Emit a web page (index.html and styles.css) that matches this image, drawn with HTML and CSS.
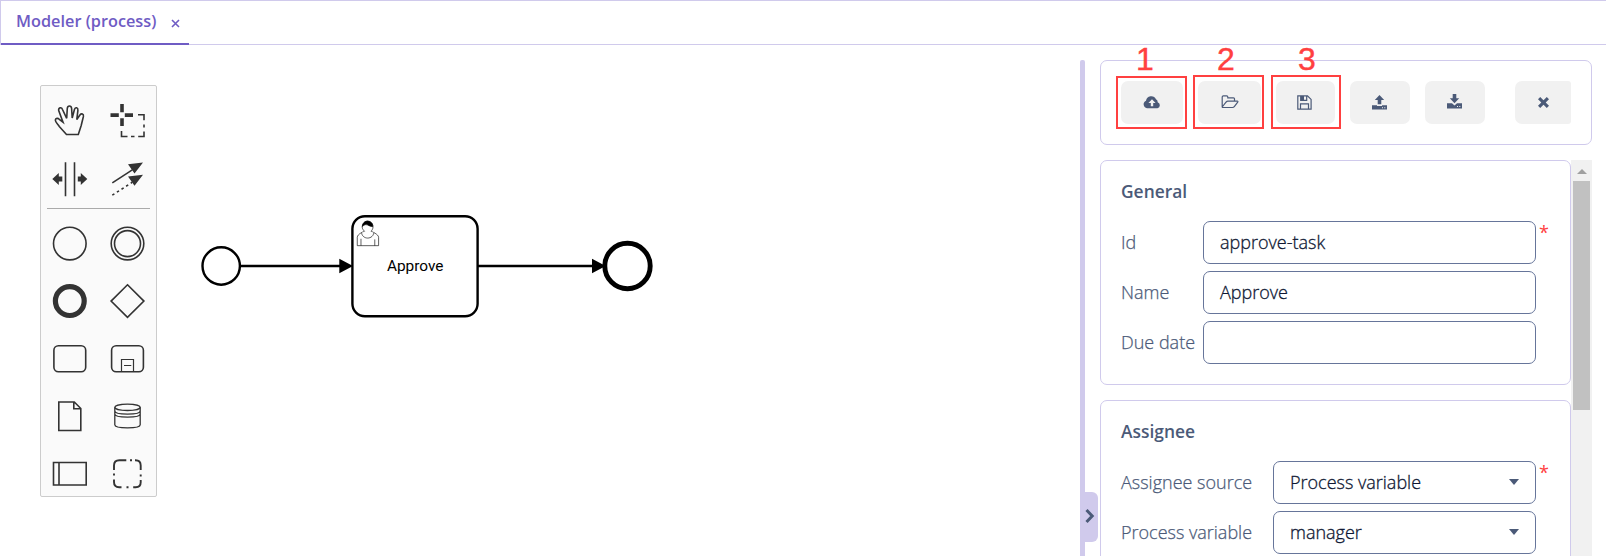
FILE: index.html
```html
<!DOCTYPE html>
<html lang="en">
<head>
<meta charset="utf-8">
<title>Modeler (process)</title>
<link rel="stylesheet" href="styles.css">
</head>
<body>
<header class="tabs">
  <div class="tab"><span class="tab-title">Modeler (process)</span>
    <svg class="tab-close" width="9" height="9" viewBox="0 0 9 9"><path d="M1 1l7 7M8 1l-7 7"/></svg>
  </div>
</header>
<main class="workspace">
  <div class="palette">
    <div class="tools">
      <svg viewBox="41 92 57.5 57.5"><path d="M66.500 134.500L59.300 126.500C57.500 124 55.400 122.200 55.300 120C55.600 118 58 118 59.300 119.300L63 122.200L58.700 110.500C58.300 107.500 61.500 106.800 62.500 109.500L66.700 118.300L67.300 108.300C67.600 105.300 71.300 105.300 71.600 108.300L72.200 118L74.500 109.300C75.500 106.800 78.200 107.500 77.900 110.300L76.800 119.500L79.900 115C81.500 113 83.900 114 83.400 116.500L81.200 125.500L78.300 134.500Z"/></svg>
      <svg viewBox="99 92 57.500 57.500"><path class="solid" d="M120.200 104h3.600v8.200h-3.600zM120.200 118.200h3.600v7.800h-3.600zM110.500 113.200h8.300v3.700h-8.300zM124.800 113.200h8.200v3.700h-8.200z"/><path d="M138 114.800h6v5.500M144 124.500v3M144 131.500v5h-5.800M134.500 136.500h-3.500M127.500 136.500h-6v-5.500"/></svg>
      <svg viewBox="41 149.500 57.500 57.500"><path d="M65.500 161.700v34M74.500 161.700v34"/><path class="solid" d="M52.300 178.400l6.500-6v3.500h3.500v5h-3.500v3.500zM87.300 178.400l-6.500-6v3.500h-3v5h3v3.500z"/></svg>
      <svg viewBox="99 149.500 57.500 57.500"><path d="M112.300 182.300l20-13"/><path stroke-dasharray="2.500 3" d="M112.300 194.700l20-13"/><path class="solid" d="M143 162l-8.500 11-6.500-9.300zM143 174.200l-8.500 11-6.500-9.300z"/></svg>
    </div>
    <div class="palette-line"></div>
    <div class="tools">
      <svg viewBox="41 215 57.5 57.5"><circle cx="69.800" cy="243.600" r="16.300"/></svg>
      <svg viewBox="99 215 57.5 57.5"><circle cx="127.500" cy="243.600" r="16.300"/><circle cx="127.500" cy="243.600" r="13"/></svg>
      <svg viewBox="41 272.500 57.5 57.5"><circle cx="69.800" cy="300.600" r="14.400" stroke-width="5.200"/></svg>
      <svg viewBox="99 272.500 57.5 57.5"><path d="M127.500 284.300l16.400 16.300-16.400 16.300-16.400-16.300z"/></svg>
      <svg viewBox="41 330 57.5 57.5"><rect x="53.900" y="345.800" width="31.800" height="26" rx="4.500"/></svg>
      <svg viewBox="99 330 57.5 57.5"><rect x="111.600" y="345.800" width="31.800" height="26" rx="4.500"/><path stroke-width="1.200" d="M121.500 371.500v-12h12v12M124 365.500h7.300"/></svg>
      <svg viewBox="41 387.500 57.5 57.5"><path d="M58.800 401.500h15.500l6.500 6.500v22h-22zM73.800 401.500v6.800h6.800"/></svg>
      <svg viewBox="99 387.500 57.5 57.5"><g stroke-width="1.300"><ellipse cx="127.500" cy="406.800" rx="12.700" ry="3.200"/><path d="M114.800 406.800v17.500c0 4.200 25.400 4.200 25.400 0v-17.500M114.800 410.500c0 4.200 25.400 4.200 25.400 0M114.800 413.500c0 4.200 25.400 4.200 25.400 0"/></g></svg>
      <svg viewBox="41 445 57.5 57.5"><path d="M53.500 462.500h32.700v22.500h-32.700zM59 462.500v22.500"/></svg>
      <svg viewBox="99 445 57.5 57.5"><path stroke-width="1.900" d="M114 470v-4.500q0-5.300 5.300-5.300h7M130 460.200h2M135 460.200h.5q5.200 0 5.200 5.300v4.500M140.700 474.500v2M140.700 480v2.300q0 5-5 5h-2.500M128.500 487.200h-2M121.500 487.200h-2.300q-5.200 0-5.200-5.200v-2.500M114 475.500v-2"/></svg>
    </div>
  </div>
  <svg class="diagram" width="913" height="511" viewBox="167 45 913 511">
    <g class="flow"><path d="M240 266h104M477.500 266h120"/><path class="head" d="M339.300 258.700L353 266l-13.700 7.300zM592 258.700l13.700 7.300-13.700 7.300z"/></g>
    <circle class="shape" cx="221.200" cy="266" r="18.700"/>
    <rect class="shape" x="352.400" y="216.200" width="125.200" height="100" rx="12.500"/>
    <circle class="shape end" cx="627.500" cy="266" r="22.700"/>
    <g class="user" transform="translate(352.200 216.200) scale(1.254)">
      <path d="m 15,12 c 0.909,-0.845 1.594,-2.049 1.594,-3.385 0,-2.554 -1.805,-4.622 -4.357,-4.622 -2.552,0 -4.288,2.068 -4.288,4.622 0,1.348 0.974,2.562 1.896,3.405 -0.529,0.187 -5.669,2.097 -5.794,4.756 v 6.718 h 17 v -6.718 c 0,-2.298 -5.528,-4.595 -6.051,-4.776z m -8,6 l 0,5.500 m 11,0 l 0,-5"/>
      <path d="m 15,12 m 2.162,1.009 c 0,2.447 -2.158,4.431 -4.821,4.431 -2.665,0 -4.822,-1.981 -4.822,-4.431"/>
      <path class="hair" d="m 15,12 m -6.900,-3.800 c 0,0 2.251,-2.358 4.274,-1.177 2.024,1.181 4.221,1.537 4.124,0.965 -0.098,-0.570 -0.117,-3.791 -4.191,-4.136 -3.572,0.001 -4.208,3.670 -4.207,4.348z"/>
    </g>
    <text class="task-name" x="415.200" y="271.300">Approve</text>
  </svg>
  <div class="splitter"><button class="collapse" aria-label="Collapse"><svg width="10" height="16" viewBox="0 0 10 16"><path d="M1.500 2l5.700 6-5.700 6"/></svg></button></div>
  <aside class="panel">
    <div class="toolbar">
      <button class="btn b1"><svg width="18" height="14" viewBox="0 0 18 14"><path d="M4 13.300a4 4 0 0 1-1-7.600A5.300 5.300 0 0 1 13 4.200a3 3 0 0 1 1.700 3A3.200 3.200 0 0 1 14.500 13.300z"/><path fill="#f1f1f1" d="M9 4.200l3.600 3.900h-2.400v3.200H7.800V8.100H5.400z"/></svg></button>
      <button class="btn b2"><svg class="line" width="18" height="14" viewBox="0 0 18 14"><path d="M1.200 12V2q0-1.200 1.200-1.200h3.300q1.100 0 1.100 1.200v.8h5.700q1 0 1 1v2.400M1.200 12l4-5q.7-.8 1.600-.8h9.500q1 0 .4.900l-3.400 4.500q-.7.900-1.800.9H2.100q-.9 0-.9-.500z"/></svg></button>
      <button class="btn b3"><svg class="line" width="15" height="15" viewBox="0 0 15 15"><path d="M.8.800h9.700l3.600 3.600v9.700H.8zM3.500 14V8.800h8V14M3.700.8v4.500h6V.8"/><path fill="#4b5a78" stroke="none" d="M4 1h3v4H4z"/></svg></button>
      <button class="btn b4"><svg width="15" height="15" viewBox="0 0 15 15"><path d="M7.500 0l4.700 5H9.300v4.200H5.700V5H2.800zM0 10.200h5v.7h5v-.7h5v4.300H0z"/><path fill="#f1f1f1" d="M10 12.300h1v1h-1zM12.300 12.300h1v1h-1z"/></svg></button>
      <button class="btn b5"><svg width="15" height="15" viewBox="0 0 15 15"><path d="M5.700 0h3.600v4.200h2.900l-4.700 5-4.700-5h2.900zM0 9.300h5l2.500 2.200L10 9.300h5v5.200H0z"/><path fill="#f1f1f1" d="M10 12h1v1h-1zM12.300 12h1v1h-1z"/></svg></button>
      <button class="btn b6"><svg width="11" height="11" viewBox="0 0 11 11"><path d="M2.200 0L5.500 3.300 8.800 0 11 2.200 7.700 5.500 11 8.800 8.800 11 5.500 7.700 2.200 11 0 8.800 3.300 5.500 0 2.200z"/></svg></button>
    </div>
    <div class="properties">
      <div class="groups">
        <section class="group">
          <h2>General</h2>
          <div class="form narrow">
            <label>Id</label><div class="field">approve-task</div><span class="required">*</span>
            <label>Name</label><div class="field">Approve</div><span></span>
            <label>Due date</label><div class="field"></div><span></span>
          </div>
        </section>
        <section class="group">
          <h2>Assignee</h2>
          <div class="form wide">
            <label>Assignee source</label><div class="field">Process variable<i class="caret"></i></div><span class="required">*</span>
            <label>Process variable</label><div class="field">manager<i class="caret"></i></div><span></span>
          </div>
        </section>
      </div>
      <div class="scrollbar"><i class="up"></i><div class="thumb"></div></div>
    </div>
  </aside>
</main>
<div class="callout c1"><span>1</span></div>
<div class="callout c2"><span>2</span></div>
<div class="callout c3"><span>3</span></div>
</body>
</html>
```
FILE: styles.css
```css
* { box-sizing: border-box; }
body { margin: 0; height: 556px; overflow: hidden; background: #fff; font-family: "Open Sans", sans-serif; font-size: 18px; color: #4b5a78; display: flex; flex-direction: column; }
button { border: 0; padding: 0; }
.tabs { flex: none; height: 45px; border: 1px solid #d0caec; border-width: 1px 0 1px 1px; display: flex; }
.tab { width: 188px; height: 44px; border-bottom: 2px solid #6f5cc4; padding: 0 0 3px 15px; display: flex; align-items: center; color: #6f5cc4; }
.tab-title { width: 140px; margin-right: 15px; font-size: 16.300px; font-weight: 600; white-space: nowrap; }
.tab-close { margin-top: 6px; fill: none; stroke: #6f5cc4; stroke-width: 1.6; }
.workspace { height: 511px; display: flex; align-items: flex-start; }
.palette { flex: none; width: 117px; height: 412px; margin: 40px 10px 0 40px; padding-top: 6px; border: 1px solid #ccc; border-radius: 2px; background: #fafafa; }
.tools { display: grid; grid-template-columns: 57.5px 57.5px; }
.tools svg { display: block; width: 57.5px; height: 57.5px; fill: none; stroke: #333; stroke-width: 1.6; }
.tools .solid { fill: #333; stroke: none; }
.palette-line { height: 1px; margin: 1px 6px 6px; background: #aaa; }
.diagram { flex: none; display: block; }
.flow, .shape { fill: none; stroke: #000; stroke-width: 2.4; }
.flow .head { fill: #000; stroke: none; }
.shape.end { stroke-width: 4.900; }
.user { fill: #fff; stroke: #000; stroke-width: .5; }
.user .hair { fill: #000; }
.task-name { font: 15.400px Roboto, sans-serif; fill: #000; text-anchor: middle; }
.splitter { flex: none; position: relative; width: 5px; height: 496px; margin-top: 15px; border-radius: 2px 2px 0 0; background: #d0caec; }
.collapse { position: absolute; left: 0; top: 432px; width: 18px; height: 50px; border-radius: 0 6px 6px 0; background: #d0caec; display: flex; align-items: center; padding: 0 0 2px 5px; }
.collapse svg { fill: none; stroke: #4b5a78; stroke-width: 3; }
.panel { width: 492px; margin: 15px 0 0 15px; }
.toolbar { height: 85px; border: 1px solid #d0caec; border-radius: 7px; padding: 20px; display: flex; }
.btn { flex: none; height: 43px; padding-bottom: 1px; border-radius: 7px; background: #f1f1f1; display: flex; align-items: center; justify-content: center; fill: #4b5a78; }
.btn .line { fill: none; stroke: #4b5a78; stroke-width: 1.2; }
.b1 { width: 62px; margin-right: 15px; }
.b2 { width: 63px; margin-right: 15px; }
.b3 { width: 59px; margin-right: 15px; padding-right: 2px; }
.b4 { width: 60px; margin-right: 15px; padding-right: 1px; }
.b5 { width: 60px; margin-right: 30px; padding: 0 1px 3px 0; }
.b6 { width: 56px; border-radius: 7px 3px 3px 7px; padding-bottom: 0; }
.properties { height: 396px; margin-top: 15px; display: flex; overflow: hidden; }
.groups { width: 471px; }
.group { border: 1px solid #d0caec; border-radius: 7px; padding: 18px 20px 20px; margin-bottom: 15px; }
h2 { margin: 0 0 18px; height: 24px; line-height: 25px; font-size: 17.400px; font-weight: 600; }
.form { display: grid; row-gap: 7px; align-items: center; }
.narrow { grid-template-columns: 82px 333px 1fr; }
.wide { grid-template-columns: 152px 263px 1fr; }
.form label { padding-bottom: 2px; font-weight: 300; white-space: nowrap; -webkit-text-stroke: .25px; }
.field { height: 43px; border: 1px solid #66759a; border-radius: 7px; padding: 0 16px 2px; display: flex; align-items: center; justify-content: space-between; color: #0e1733; font-weight: 300; -webkit-text-stroke: .3px; }
.caret { width: 0; height: 0; border: 5.5px solid transparent; border-top: 6px solid #4b5a78; border-bottom: 0; }
.required { align-self: start; padding-left: 3px; line-height: 22px; color: #ff4040; }
.scrollbar { width: 21px; background: #f1f1f1; padding: 9px 2px 0; display: flex; flex-direction: column; align-items: center; }
.up { border: 5px solid transparent; border-bottom-color: #a0a0a0; border-top: 0; }
.thumb { width: 17px; height: 229px; margin-top: 7px; background: #c1c1c1; }
.callout { position: absolute; top: 75px; width: 71px; height: 54px; border: 2px solid #ff4040; }
.callout span { position: absolute; top: -36px; line-height: 36px; font-family: "Liberation Sans", sans-serif; font-size: 32px; color: #ff4040; -webkit-text-stroke: .4px #ff4040; }
.c1 { left: 1116px; top: 76px; height: 53px; }
.c1 span { left: 18px; top: -37px; }
.c2 { left: 1193px; }
.c2 span { left: 22px; }
.c3 { left: 1271px; width: 70px; }
.c3 span { left: 25px; }
```
